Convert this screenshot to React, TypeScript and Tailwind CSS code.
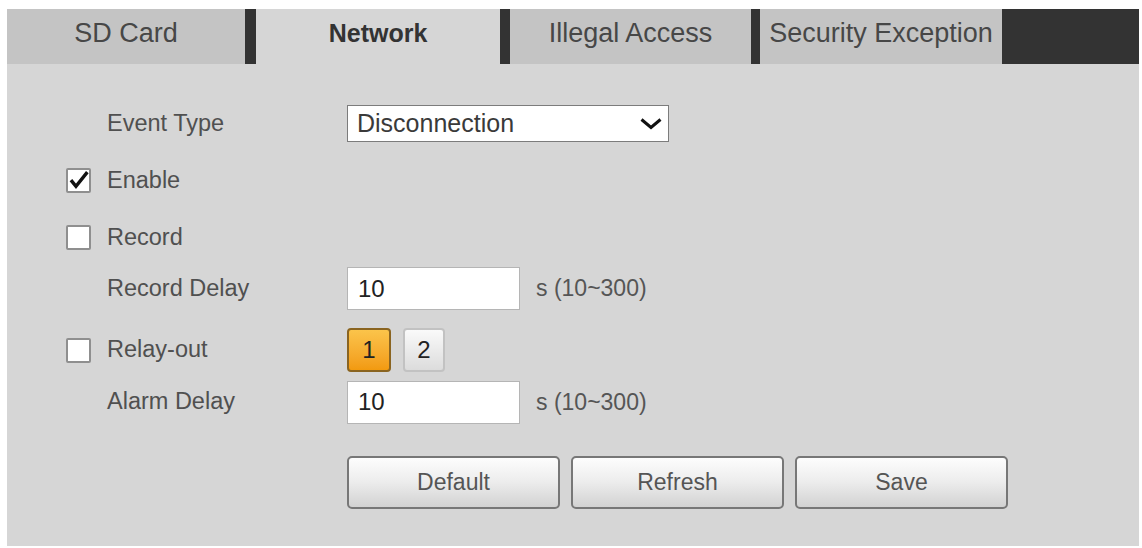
import React from "react";

const tabs = [
  { label: "SD Card", w: "w-[238px]", active: false },
  { label: "Network", w: "w-[244px]", active: true },
  { label: "Illegal Access", w: "w-[241px]", active: false },
  { label: "Security Exception", w: "w-[242px]", active: false },
];

function CheckBox({ checked }: { checked?: boolean }) {
  return (
    <div className="w-[25px] h-[25px] bg-white border-2 border-[#8f8f8f] rounded-[2px] flex items-center justify-center shrink-0">
      {checked && (
        <svg width="23" height="23" viewBox="0 0 25 25">
          <polyline points="3.5,12 9.5,19.5 23,2.5" fill="none" stroke="#111" strokeWidth="4" strokeLinejoin="miter" />
        </svg>
      )}
    </div>
  );
}

function Label({ text, box, checked }: { text: string; box?: boolean; checked?: boolean }) {
  if (box) {
    return (
      <div className="w-[340px] shrink-0 flex items-center gap-[16px] pl-[59px]">
        <CheckBox checked={checked} />
        <span>{text}</span>
      </div>
    );
  }
  return (
    <div className="w-[340px] shrink-0 pl-[100px]">
      <span>{text}</span>
    </div>
  );
}

function DelayInput({ value }: { value: string }) {
  return (
    <div className="flex items-center">
      <div className="w-[173px] h-[43px] bg-white border border-[#b5b5b5] flex items-center pl-[10px] text-[24px] text-[#222]">
        {value}
      </div>
      <span className="ml-[16px] text-[23px] text-[#555]">s (10~300)</span>
    </div>
  );
}

export default function App() {
  return (
    <div className="w-[1142px] h-[548px] bg-white pt-[9px] pl-[7px] font-['Liberation_Sans',Arial,sans-serif]">
      <div className="w-[1132px] h-[537px] bg-[#d6d6d6] flex flex-col">
        {/* Tab strip */}
        <div className="flex h-[55px]">
          {tabs.map((t, i) => (
            <React.Fragment key={t.label}>
              {i > 0 && <div className={i === 1 ? "w-[11px] bg-[#333]" : i === 2 ? "w-[10px] bg-[#333]" : "w-[9px] bg-[#333]"} />}
              <div
                className={`${t.w} flex items-center justify-center pb-[6px] ${
                  t.active ? "bg-[#d6d6d6] text-[#333] font-bold text-[25px]" : "bg-[#c4c4c4] text-[#474747] text-[27px]"
                }`}
              >
                {t.label}
              </div>
            </React.Fragment>
          ))}
          <div className="flex-1 bg-[#333]" />
        </div>

        <div className="flex flex-col text-[23.5px] text-[#505050]">
          {/* Event Type */}
          <div className="flex items-center h-[37px] mt-[41px]">
            <Label text="Event Type" />
            <div className="w-[322px] h-[37px] bg-white border border-[#7c7c7c] flex items-center justify-between pl-[9px] pr-[6px] text-[25px] text-[#3a3a3a]">
              <span>Disconnection</span>
              <svg width="22" height="12" viewBox="0 0 22 12">
                <polyline points="1.5,1.5 11,9.5 20.5,1.5" fill="none" stroke="#111" strokeWidth="3" />
              </svg>
            </div>
          </div>

          {/* Enable */}
          <div className="flex items-center h-[25px] mt-[26px]">
            <Label text="Enable" box checked />
          </div>

          {/* Record */}
          <div className="flex items-center h-[25px] mt-[32px]">
            <Label text="Record" box />
          </div>

          {/* Record Delay */}
          <div className="flex items-center h-[43px] mt-[17px]">
            <Label text="Record Delay" />
            <DelayInput value="10" />
          </div>

          {/* Relay-out */}
          <div className="flex items-center h-[44px] mt-[18px]">
            <Label text="Relay-out" box />
            <div className="flex gap-[12px] text-[24px] text-[#222]">
              <div className="w-[44px] h-[44px] rounded-[4px] border-2 border-[#8a6420] bg-gradient-to-b from-[#fbc44a] to-[#f29a0e] flex items-center justify-center">
                1
              </div>
              <div className="w-[42px] h-[44px] rounded-[4px] border-2 border-[#c2c2c2] bg-gradient-to-b from-[#fafafa] to-[#dcdcdc] flex items-center justify-center">
                2
              </div>
            </div>
          </div>

          {/* Alarm Delay */}
          <div className="flex items-center h-[42px] mt-[9px]">
            <Label text="Alarm Delay" />
            <DelayInput value="10" />
          </div>

          {/* Action buttons */}
          <div className="flex h-[53px] mt-[33px] pl-[340px] gap-[11px]">
            {["Default", "Refresh", "Save"].map((b) => (
              <button
                key={b}
                className="w-[213px] h-[53px] rounded-[5px] border-2 border-[#777] bg-gradient-to-b from-[#fdfdfd] via-[#ececec] to-[#d2d2d2] text-[23px] text-[#555] flex items-center justify-center"
              >
                {b}
              </button>
            ))}
          </div>
        </div>
      </div>
    </div>
  );
}
